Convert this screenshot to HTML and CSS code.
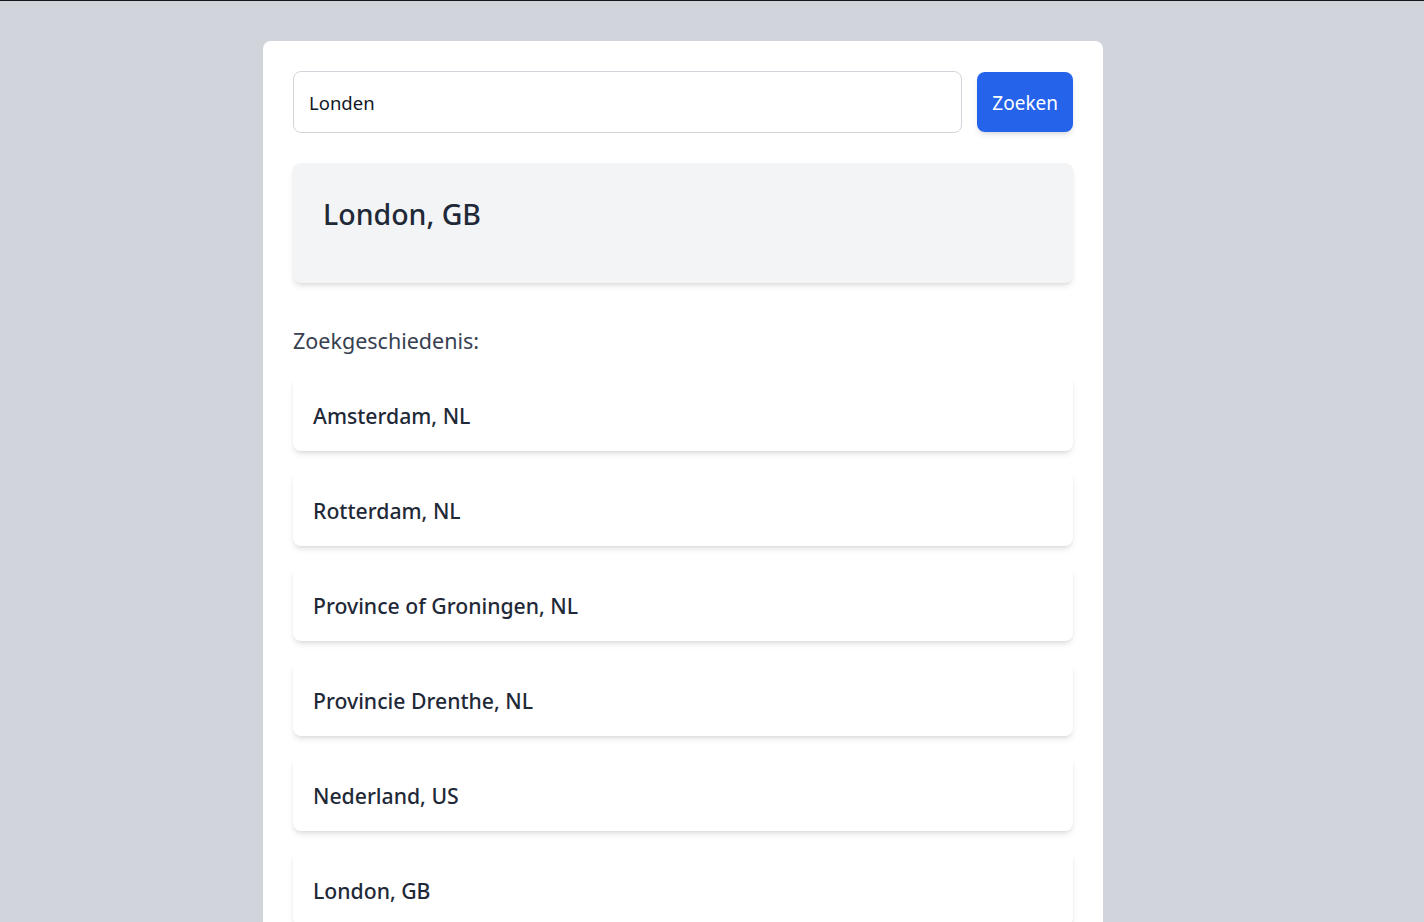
FILE: index.html
```html
<!DOCTYPE html>
<html lang="nl">
<head>
<meta charset="utf-8">
<title>Weer</title>
<link rel="stylesheet" href="styles.css">
</head>
<body>
<div class="page">
  <main class="card">
    <form class="search">
      <input class="search-input" type="text" value="Londen">
      <button class="search-btn" type="button">Zoeken</button>
    </form>
    <section class="result">
      <h2 class="result-title">London, GB</h2>
    </section>
    <h3 class="history-title">Zoekgeschiedenis:</h3>
    <ul class="history">
      <li class="history-item">Amsterdam, NL</li>
      <li class="history-item">Rotterdam, NL</li>
      <li class="history-item">Province of Groningen, NL</li>
      <li class="history-item">Provincie Drenthe, NL</li>
      <li class="history-item">Nederland, US</li>
      <li class="history-item">London, GB</li>
    </ul>
  </main>
</div>
</body>
</html>
```

FILE: styles.css
```css
* { box-sizing: border-box; }
html, body { margin: 0; padding: 0; }
body {
  background: #d1d5db;
  border-top: 1px solid #16161a;
  font-family: "Noto Sans", "Open Sans", sans-serif;
  color: #1f2937;
  height: 922px;
  overflow: hidden;
}
.page {
  width: 1366px;
  padding-top: 40px;
}
.card {
  width: 840px;
  margin: 0 auto;
  background: #fff;
  border-radius: 8px;
  padding: 30px;
}
.search {
  display: flex;
  gap: 15px;
  align-items: center;
  margin: 0;
}
.search-input {
  flex: 1;
  height: 62px;
  border: 1px solid #d1d5db;
  border-radius: 8px;
  padding: 0 15px;
  font-family: inherit;
  font-size: 18.5px;
  color: #111827;
  outline: none;
}
.search-btn {
  height: 60px;
  padding: 2px 15px 0;
  background: #2563eb;
  color: #fff;
  border: none;
  border-radius: 8px;
  font-family: inherit;
  font-size: 19px;
  box-shadow: 0 4px 6px -1px rgba(0,0,0,0.1), 0 2px 4px -2px rgba(0,0,0,0.1);
}
.result {
  margin-top: 30px;
  background: #f3f4f6;
  border-radius: 8px;
  height: 120px;
  padding: 30px;
  box-shadow: 0 4px 6px -1px rgba(0,0,0,0.1), 0 2px 4px -2px rgba(0,0,0,0.1);
}
.result-title {
  margin: 0;
  font-size: 28.5px;
  font-weight: 500;
  line-height: 42px;
  color: #1f2937;
}
.history-title {
  margin: 40px 0 0;
  font-size: 21.5px;
  font-weight: 400;
  line-height: 36px;
  color: #374151;
}
.history {
  list-style: none;
  margin: 17px 0 0;
  padding: 0;
  display: flex;
  flex-direction: column;
  gap: 20px;
}
.history-item {
  height: 75px;
  display: flex;
  align-items: center;
  padding: 3px 20px 0;
  background: #fff;
  border-radius: 8px;
  font-size: 21.2px;
  font-weight: 500;
  color: #1f2937;
  box-shadow: 0 4px 6px -1px rgba(0,0,0,0.1), 0 2px 4px -2px rgba(0,0,0,0.1);
}
```
